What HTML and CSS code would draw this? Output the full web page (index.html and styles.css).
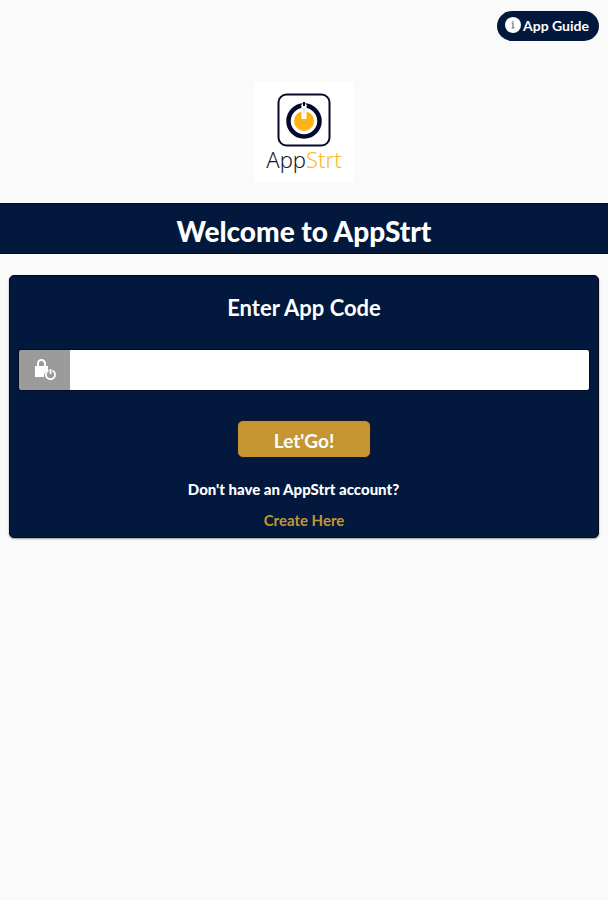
FILE: index.html
```
<!DOCTYPE html>
<html lang="en">
<head>
<meta charset="utf-8">
<meta name="viewport" content="width=device-width, initial-scale=1">
<title>AppStrt</title>
<link rel="stylesheet" href="styles.css">
</head>
<body>
<header class="topbar">
  <button class="guide" type="button">
    <svg class="guide-icon" viewBox="0 0 16 16" aria-hidden="true">
      <circle cx="8" cy="8" r="8" fill="#fff"/>
      <path d="M6.5 6H8v5M6.500 11h3M8 3.800v1" fill="none" stroke="#68738a" stroke-width="1.2"/>
    </svg>
    App Guide
  </button>
</header>
<main>
  <div class="logo">
    <svg class="logo-mark" viewBox="0 0 54 54" aria-hidden="true">
      <rect x="1.500" y="1.500" width="51" height="51" rx="8" fill="#fff" stroke="#09092c" stroke-width="2"/>
      <circle cx="27" cy="28" r="15.500" fill="none" stroke="#05082d" stroke-width="4.500"/>
      <circle cx="27" cy="28" r="10" fill="#fdb515"/>
      <path d="M24.500 12l2.500-2.500 2.500 2.500v14h-5z" fill="#fff"/>
      <path d="M24.500 13l2.500-2.500 2.500 2.500" fill="none" stroke="#fff" stroke-width="1.500"/>
      <path d="M27 9v4" stroke="#05082d" stroke-width="2"/>
      <path d="M27 15v5" stroke="#c9c9cf" stroke-width="1"/>
    </svg>
    <div class="logo-name">App<span>Strt</span></div>
  </div>
  <h1 class="banner">Welcome to AppStrt</h1>
  <form class="card">
    <label class="card-title" for="code">Enter App Code</label>
    <div class="field">
      <span class="field-icon">
        <svg viewBox="0 0 24 24" aria-hidden="true">
          <path d="M5 9V5.500a3.500 3.500 0 0 1 7 0V9" fill="none" stroke="#fff" stroke-width="2"/>
          <path d="M2 8h13v4.500a6.500 6.500 0 0 0-4 6.500H2z" fill="#fff"/>
          <path d="M15.500 12.500a4.600 4.600 0 1 0 4 0M17.500 11v5" fill="none" stroke="#fff" stroke-width="1.800"/>
        </svg>
      </span>
      <input id="code" type="text">
    </div>
    <button class="go" type="submit">Let'Go!</button>
    <p class="note">Don't have an AppStrt account?</p>
    <a class="create" href="#create">Create Here</a>
  </form>
</main>
</body>
</html>
```
FILE: styles.css
```
* {
  box-sizing: border-box;
}

body {
  margin: 0;
  min-height: 100vh;
  background: #fafafa;
  color: #fff;
  font-family: Lato, "Open Sans", sans-serif;
  font-weight: 700;
}

button,
input {
  border: 0;
  font: inherit;
  color: inherit;
}

.topbar {
  display: flex;
  justify-content: flex-end;
  padding: 11px 9px 0;
}

.guide {
  display: flex;
  align-items: center;
  gap: 2px;
  height: 30px;
  padding: 0 10px 2px 8px;
  border-radius: 15px;
  background: #02183d;
  font-size: 14px;
}

.guide-icon {
  width: 16px;
  height: 16px;
}

.logo {
  display: flex;
  flex-direction: column;
  align-items: center;
  width: 100px;
  height: 100px;
  margin: 41px auto 21px;
  padding-top: 11px;
  background: #fff;
}

.logo-mark {
  width: 54px;
  height: 54px;
}

.logo-name {
  color: #15182f;
  font-family: "Noto Sans", sans-serif;
  font-size: 22px;
  font-weight: 300;
  line-height: 24px;
}

.logo-name span {
  color: #fdb92e;
}

.banner {
  margin: 0 0 21px;
  padding: 12px 9px 7px;
  border-top: 1px solid #060b19;
  border-bottom: 1px solid #060b19;
  background: #02183d;
  font-size: 28px;
  font-weight: 900;
  line-height: 30px;
  text-align: center;
}

.card {
  display: flex;
  flex-direction: column;
  align-items: center;
  margin: 0 9px;
  padding: 19px 8px 7px;
  border: 1px solid #020815;
  border-radius: 5px;
  background: #02183d;
  box-shadow: 0 1px 2px #9a9a9a;
}

.card-title {
  font-size: 22px;
  line-height: 26px;
}

.field {
  display: flex;
  align-self: stretch;
  height: 42px;
  margin: 28px 0 29px;
  border: 1px solid #020c22;
  border-radius: 3px;
  overflow: hidden;
}

.field-icon {
  display: flex;
  align-items: center;
  justify-content: center;
  width: 51px;
  background: #9b9b9b;
}

.field-icon svg {
  width: 24px;
  height: 24px;
}

.field input {
  flex: 1;
  min-width: 0;
  padding: 0 12px;
  background: #fff;
  color: #02183d;
  font-size: 18px;
}

.go {
  height: 38px;
  padding: 2px 36px 0;
  border: 1px solid #17162b;
  border-radius: 6px;
  background: #c59532;
  font-size: 19px;
}

.note {
  margin: 21px 0 11px;
  padding-right: 21px;
  font-size: 15px;
  font-weight: 900;
  line-height: 20px;
}

.create {
  color: #c59532;
  font-size: 15px;
  line-height: 20px;
  text-decoration: none;
}
```
